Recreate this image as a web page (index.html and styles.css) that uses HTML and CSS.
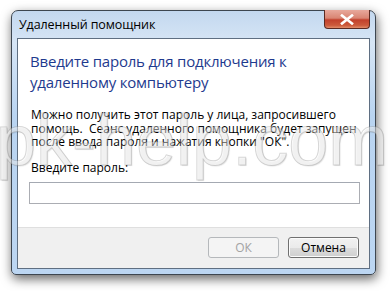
FILE: index.html
```html
<!DOCTYPE html>
<html lang="ru">
<head>
    <meta charset="UTF-8">
    <title>Удаленный помощник</title>
    <link rel="stylesheet" href="styles.css">
</head>
<body>

<div class="window">
    <div class="titlebar">
        <span class="title">Удаленный помощник</span>
        <span class="close">
            <svg width="14" height="11" viewBox="0 0 14 11">
                <path d="M2 1.5 L12 9.5 M12 1.5 L2 9.5" stroke="#ffffff" stroke-width="2.6" stroke-linecap="square"/>
            </svg>
        </span>
    </div>
    <div class="client">
        <div class="content">
            <h1 class="instruction">Введите пароль для подключения к удаленному компьютеру</h1>
            <p class="text">Можно получить этот пароль у лица, запросившего помощь.&nbsp; Сеанс удаленного помощника будет запущен после ввода пароля и нажатия кнопки "ОК".</p>
            <label class="label" for="pwd">Введите пароль:</label>
            <input class="field" id="pwd" type="password">
        </div>
        <div class="footer">
            <button class="btn" disabled>ОК</button>
            <button class="btn btn-default">Отмена</button>
        </div>
    </div>
</div>

<!-- site watermark over the screenshot -->
<div class="watermark">pk-help.com</div>

</body>
</html>
```

FILE: styles.css
```css
* {
    box-sizing: border-box;
    margin: 0;
    padding: 0;
}
body {
    width: 391px;
    height: 291px;
    background: #ffffff;
    font-family: "Open Sans", "Noto Sans", sans-serif;
    padding: 10px 0 0 11px;
    position: relative;
    overflow: hidden;
}
.window {
    width: 365px;
    height: 265px;
    border: 1px solid #3d4650;
    border-radius: 7px 7px 5px 5px;
    padding: 0 5px 5px 5px;
    background: linear-gradient(to bottom, #c3d8ef 0%, #d6e5f5 12%, #b9d4f1 40%, #bcd6f2 100%);
    box-shadow: 1px 4px 11px rgba(0, 0, 0, 0.6);
    display: flex;
    flex-direction: column;
}
.titlebar {
    height: 27px;
    display: flex;
    justify-content: space-between;
    align-items: center;
    padding-left: 2px;
}
.title {
    font-size: 12.5px;
    color: #000000;
    letter-spacing: -0.1px;
}
.close {
    align-self: flex-start;
    margin-top: -1px;
    width: 46px;
    height: 19px;
    border: 1px solid #5b2a22;
    border-top: none;
    border-radius: 0 0 4px 4px;
    background: linear-gradient(to bottom, #e8a99c 0%, #d98573 45%, #c2412c 55%, #cc5a3c 85%, #e28c6a 100%);
    display: flex;
    justify-content: center;
    align-items: center;
}
.client {
    flex: 1;
    border: 1px solid #5f6f82;
    background: #ffffff;
    display: flex;
    flex-direction: column;
}
.content {
    height: 188px;
    padding: 12px 11px 0 11px;
}
.instruction {
    font-size: 15px;
    font-weight: normal;
    line-height: 21px;
    color: #1e3a8e;
    padding-left: 1px;
    letter-spacing: -0.2px;
}
.text {
    margin-top: 15px;
    font-size: 12px;
    line-height: 13.5px;
    color: #000000;
    padding-left: 2px;
    letter-spacing: 0;
}
.label {
    display: block;
    margin-top: 12px;
    font-size: 12px;
    line-height: 14px;
    padding-left: 2px;
}
.field {
    display: block;
    margin-top: 7px;
    width: 331px;
    height: 22px;
    border: 1px solid #abadb3;
    border-top-color: #a4a9b2;
    background: #ffffff;
}
.footer {
    flex: 1;
    background: #f0f0f0;
    border-top: 1px solid #dfdfdf;
    display: flex;
    justify-content: flex-end;
    align-items: flex-start;
    gap: 9px;
    padding: 9px 10px 0 0;
}
.btn {
    width: 71px;
    height: 21px;
    font-family: inherit;
    font-size: 12px;
    color: #a3a3a3;
    background: #f4f4f4;
    border: 1px solid #b5b8bb;
    border-radius: 3px;
}
.btn-default {
    color: #000000;
    border-color: #707070;
    background: linear-gradient(to bottom, #f2f2f2 0%, #ebebeb 50%, #dddddd 51%, #cfcfcf 100%);
    box-shadow: inset 0 0 0 1px #fbfbfb;
}
.watermark {
    position: absolute;
    left: -4px;
    top: 100px;
    font-family: "Liberation Sans", Arial, sans-serif;
    font-size: 72px;
    line-height: 80px;
    color: rgba(255, 255, 255, 0.45);
    -webkit-text-stroke: 1px rgba(110, 110, 110, 0.28);
    text-shadow: 1px 1px 1px rgba(0, 0, 0, 0.1);
    white-space: nowrap;
    pointer-events: none;
}
```
